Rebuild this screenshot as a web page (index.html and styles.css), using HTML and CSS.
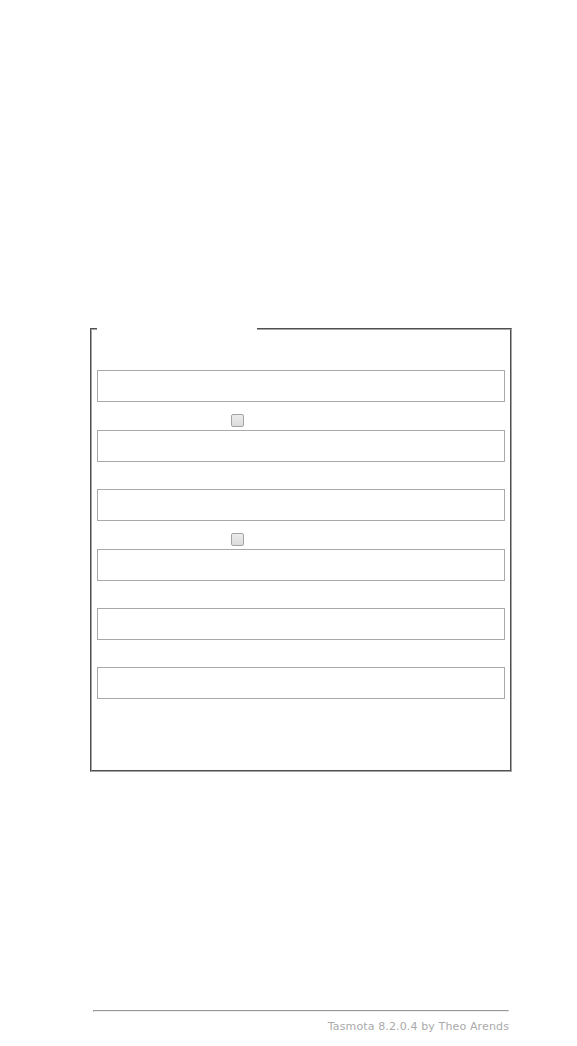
FILE: index.html
```html
<!DOCTYPE html>
<html lang="en">
<head>
    <meta charset="UTF-8">
    <meta name="viewport" content="width=device-width, initial-scale=1.0">
    <title>Tasmota - Configure Wifi</title>
    <link rel="stylesheet" href="styles.css">
</head>
<body>
    <div class="main">
        <div class="head">
            <h3>Sonoff Basic Module</h3>
            <h2>Tasmota</h2>
        </div>
        <div class="net"><a href="#p">HomeNet</a>&nbsp;(6)&nbsp;<span class="q">82% (-59 dBm)</span></div>
        <div class="net"><a href="#p">HomeNet-5G</a>&nbsp;(36)&nbsp;<span class="q">64% (-68 dBm)</span></div>
        <div class="net"><a href="#p">Guest</a>&nbsp;(6)&nbsp;<span class="q">58% (-71 dBm)</span></div>
        <div class="net"><a href="#p">Workshop</a>&nbsp;(11)&nbsp;<span class="q">40% (-80 dBm)</span></div>
        <div class="net"><a href="#p">Neighbour</a>&nbsp;(1)&nbsp;<span class="q">22% (-89 dBm)</span></div>
        <div class="net"><a href="#">Scan for wifi networks</a></div>
        <br>
        <fieldset>
            <legend><b>&nbsp;Wifi parameters&nbsp;</b></legend>
            <form name="wifi">
                <p><b>AP1 SSId</b> (HomeNet)<br><input name="s1" placeholder="HomeNet"></p>
                <p><label><b>AP1 Password</b><input type="checkbox" class="show"></label><br><input name="p1" type="password" placeholder="AP1 Password"></p>
                <p><b>AP2 SSId</b> (Guest)<br><input name="s2" placeholder="Guest"></p>
                <p><label><b>AP2 Password</b><input type="checkbox" class="show"></label><br><input name="p2" type="password" placeholder="AP2 Password"></p>
                <p><b>Hostname</b> (%s-%04d)<br><input name="h" placeholder="%s-%04d"></p>
                <p><b>CORS Domain</b><br><input name="c" placeholder=""></p>
                <br>
                <button name="save" class="save">Save</button>
            </form>
        </fieldset>
        <div class="spacer"></div>
        <form class="menu">
            <p><button>Configure Module</button></p>
            <p><button>Configure MQTT</button></p>
            <p><button>Configure Logging</button></p>
            <p><button>Configuration</button></p>
        </form>
        <div class="foot">
            <hr>
            <a href="#">Tasmota 8.2.0.4 by Theo Arends</a>
        </div>
    </div>
    <script>
    // show / hide the password fields
    document.querySelectorAll(".show").forEach(box => {
        box.onclick = () => {
            const field = box.closest("p").querySelector("input[type=password], input.shown");
            field.classList.toggle("shown");
            field.type = field.type === "password" ? "text" : "password";
        };
    });
    </script>
</body>
</html>
```

FILE: styles.css
```css
body{
    background-color: #ffffff;
    color: #ffffff;
    font-family: "DejaVu Sans", Verdana, sans-serif;
    font-size: 16px;
    line-height: 1.215;
}
a{
    color: #ffffff;
    text-decoration: none;
}
.main{
    width: 426px;
    padding: 5px;
    margin-left: 75px;
}
.head{
    text-align: center;
}
h3{
    font-size: 1.17em;
    margin: 18.7px 0;
}
h2{
    font-size: 1.5em;
    margin: 19.9px 0;
}
.net{
    padding: 5px;
}
fieldset{
    padding: 4px 5px 5px;
    margin: 0 2px;
    border: 2px groove #a4a4a4;
}
legend b{
    font-weight: bold;
}
p{
    margin: 8px 0;
}
input{
    display: inline-block;
    width: 100%;
    height: 32px;
    box-sizing: border-box;
    padding: 5px;
    border: 1px solid #a9a9a9;
    background-color: #ffffff;
    color: #ffffff;
    font: 16px "DejaVu Sans", Verdana, sans-serif;
}
input::placeholder{
    color: #ffffff;
}
input.show{
    appearance: none;
    width: 13px;
    height: 13px;
    margin: 0 0 0 7px;
    padding: 0;
    vertical-align: -2px;
    border: 1px solid #a3a3a3;
    border-radius: 2px;
    background: linear-gradient(#ececec, #dcdcdc);
}
button{
    display: block;
    width: 100%;
    border: 0;
    border-radius: 0.3rem;
    background-color: #ffffff;
    color: #ffffff;
    font-family: "DejaVu Sans", Verdana, sans-serif;
    font-size: 1.2rem;
    line-height: 2.4rem;
    padding: 0;
}
.spacer{
    height: 10px;
}
.menu{
    padding-bottom: 21px;
}
.foot{
    padding: 5px;
    text-align: right;
    font-size: 11px;
}
.foot hr{
    margin: 8px 0;
}
.foot a{
    color: #aaaaaa;
    letter-spacing: 0.13px;
}
```
